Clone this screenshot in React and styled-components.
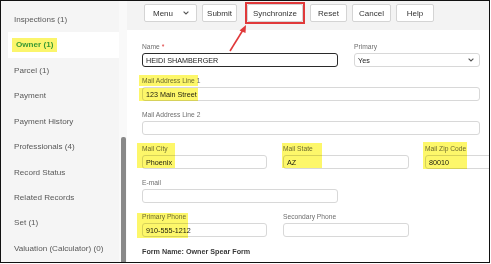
import React from 'react'
import styled, { createGlobalStyle } from 'styled-components'

const GlobalStyle = createGlobalStyle`
  html, body { margin: 0; padding: 0; background: #fff; }
  body { font-family: 'Liberation Sans', Arial, sans-serif; }
`

const Frame = styled.div`
  position: relative;
  width: 490px;
  height: 263px;
  box-sizing: border-box;
  border: 1px solid #111;
  display: flex;
  overflow: hidden;
  background: #fff;
`
const Sidebar = styled.div`
  width: 118px;
  flex-shrink: 0;
  background: #f5f5f5;
  padding-top: 6px;
  box-sizing: border-box;
`
const NavItem = styled.div`
  height: 25.4px;
  display: flex;
  align-items: center;
  font-size: 8.1px;
  color: #595959;
  padding-left: ${p => (p.active ? '4px' : '13px')};
  margin-left: ${p => (p.active ? '7px' : '0')};
  background: ${p => (p.active ? '#fff' : 'transparent')};
  font-weight: ${p => (p.active ? 700 : 400)};
`
const Marked = styled.span`
  background: #fbf56c;
  color: #3a9a34;
  padding: 0 4px;
  line-height: 14px;
`
const ScrollTrack = styled.div`
  width: 8px;
  flex-shrink: 0;
  background: #f9f9f9;
  display: flex;
  flex-direction: column;
  align-items: center;
  padding-top: 136px;
  box-sizing: border-box;
`
const Thumb = styled.div`
  width: 5px;
  flex: 1;
  background: #898989;
  border-radius: 2px 2px 0 0;
`
const Main = styled.div`
  flex: 1;
  display: flex;
  flex-direction: column;
  min-width: 0;
`
const Toolbar = styled.div`
  height: 29px;
  background: #f3f3f3;
  display: flex;
  align-items: flex-start;
  padding: 3px 0 0 17px;
  box-sizing: border-box;
  gap: 5px;
`
const Button = styled.div`
  position: relative;
  width: ${p => p.w}px;
  height: 18px;
  box-sizing: border-box;
  background: #fff;
  border: 1px solid #d4d4d4;
  border-radius: 2px;
  display: flex;
  align-items: center;
  justify-content: ${p => (p.split ? 'space-between' : 'center')};
  padding: ${p => (p.split ? '0 7px 0 8px' : '0')};
  font-size: 8px;
  color: #333;
  margin-left: ${p => p.ml || 0}px;
`
const RedBox = styled.div`
  position: absolute;
  inset: -3px;
  border: 2px solid #e0393a;
`
const Chevron = styled.svg`
  width: 6px;
  height: 4px;
`
const Form = styled.div`
  padding: 12px 0 0 15px;
  display: flex;
  flex-direction: column;
  gap: 9px;
`
const Row = styled.div`
  display: flex;
  gap: ${p => p.gap || 16}px;
`
const Field = styled.div`
  position: relative;
  width: ${p => p.w}px;
  flex-shrink: 0;
`
const Label = styled.div`
  font-size: 6.7px;
  line-height: 9px;
  height: 9px;
  margin-bottom: 2px;
  color: #6f6f6f;
  white-space: nowrap;
`
const Req = styled.span`
  color: #d33;
`
const Input = styled.div`
  height: 14px;
  box-sizing: border-box;
  border: ${p => (p.focused ? '1.5px solid #2a2a2a' : '1px solid #d8d8d8')};
  border-radius: 3px;
  display: flex;
  align-items: center;
  justify-content: space-between;
  padding: 0 5px 0 3px;
  font-size: 7.2px;
  color: #222;
  white-space: nowrap;
`
const Highlight = styled.div`
  position: absolute;
  left: ${p => p.x}px;
  top: ${p => p.y}px;
  width: ${p => p.w}px;
  height: ${p => p.h}px;
  background: #fdf76a;
  mix-blend-mode: multiply;
  pointer-events: none;
`
const FormName = styled.div`
  font-size: 7.2px;
  font-weight: 700;
  color: #3a3a3a;
  margin-top: 1px;
`
const Arrow = styled.svg`
  position: absolute;
  left: 0;
  top: 0;
  width: 490px;
  height: 263px;
  pointer-events: none;
`

const nav = [
  'Inspections (1)', 'Owner (1)', 'Parcel (1)', 'Payment', 'Payment History',
  'Professionals (4)', 'Record Status', 'Related Records', 'Set (1)', 'Valuation (Calculator) (0)'
]

const Down = () => (
  <Chevron viewBox='0 0 6 4'>
    <path d='M0.6 0.6 L3 3 L5.4 0.6' fill='none' stroke='#555' strokeWidth='1.1' />
  </Chevron>
)

const App = () => (
  <Frame>
    <GlobalStyle />
    <Sidebar>
      {nav.map(n => (
        n === 'Owner (1)'
          ? <NavItem key={n} active><Marked>{n}</Marked></NavItem>
          : <NavItem key={n}>{n}</NavItem>
      ))}
    </Sidebar>
    <ScrollTrack><Thumb /></ScrollTrack>
    <Main>
      <Toolbar>
        <Button w={53} split>Menu <Down /></Button>
        <Button w={35}>Submit</Button>
        <Button w={56} ml={5}>Synchronize<RedBox /></Button>
        <Button w={37} ml={2}>Reset</Button>
        <Button w={39}>Cancel</Button>
        <Button w={38}>Help</Button>
      </Toolbar>
      <Form>
        <Row>
          <Field w={196}>
            <Label>Name <Req>*</Req></Label>
            <Input focused>HEIDI SHAMBERGER</Input>
          </Field>
          <Field w={126}>
            <Label>Primary</Label>
            <Input>Yes <Down /></Input>
          </Field>
        </Row>
        <Field w={338}>
          <Label>Mail Address Line 1</Label>
          <Input>123 Main Street</Input>
          <Highlight x={-3} y={-1} w={59} h={11} />
          <Highlight x={-3} y={12} w={59} h={13} />
        </Field>
        <Field w={338}>
          <Label>Mail Address Line 2</Label>
          <Input />
        </Field>
        <Row>
          <Field w={125}>
            <Label>Mail City</Label>
            <Input>Phoenix</Input>
            <Highlight x={-5} y={-1} w={38} h={25} />
          </Field>
          <Field w={126}>
            <Label>Mail State</Label>
            <Input>AZ</Input>
            <Highlight x={-1} y={-1} w={40} h={25} />
          </Field>
          <Field w={126}>
            <Label>Mail Zip Code</Label>
            <Input>80010</Input>
            <Highlight x={-2} y={-2} w={44} h={27} />
          </Field>
        </Row>
        <Field w={196}>
          <Label>E-mail</Label>
          <Input />
        </Field>
        <Row>
          <Field w={125}>
            <Label>Primary Phone</Label>
            <Input>910-555-1212</Input>
            <Highlight x={-5} y={1} w={51} h={25} />
          </Field>
          <Field w={126}>
            <Label>Secondary Phone</Label>
            <Input />
          </Field>
        </Row>
        <FormName>Form Name: Owner Spear Form</FormName>
      </Form>
    </Main>
    <Arrow viewBox='0 0 490 263'>
      <line x1='229' y1='50' x2='242' y2='29' stroke='#e0393a' strokeWidth='1.6' />
      <polygon points='245,24 238.5,29.5 244.5,32' fill='#e0393a' />
    </Arrow>
  </Frame>
)

export default App
